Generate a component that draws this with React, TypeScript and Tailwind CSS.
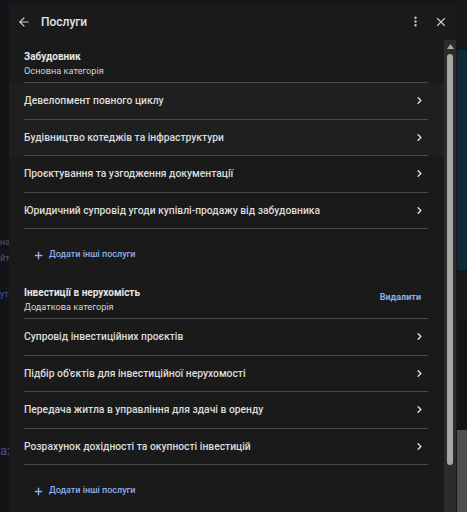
import React from "react";
import { ArrowLeft, EllipsisVertical, X, ChevronRight, Plus } from "lucide-react";

const font = { fontFamily: "Roboto, 'Noto Sans', 'Liberation Sans', sans-serif" };

function Row({ label, hover }: { label: string; hover?: boolean }) {
  return (
    <div className={`flex flex-col ${hover ? "bg-[#1f1f1f]" : ""}`}>
      <div className="mx-[15px] mr-[16px] flex h-[35.5px] items-center justify-between">
        <span className="text-[10.3px] font-medium text-[#dcdcdc]">{label}</span>
        <ChevronRight size={11} strokeWidth={3} className="mr-[3px] text-[#dedede]" />
      </div>
      <div className="mx-[15px] mr-[16px] h-px bg-[#4a4a4a]" />
    </div>
  );
}

function AddButton() {
  return (
    <div className="flex h-[48px] items-center pl-[24px] pt-[4px]">
      <Plus size={11} strokeWidth={3} className="text-[#8fb0e6]" />
      <span className="ml-[5px] text-[9px] font-medium text-[#8fb0e6]">Додати інші послуги</span>
    </div>
  );
}

function SectionHeader({ title, sub, action }: { title: string; sub: string; action?: string }) {
  return (
    <div className="mx-[15px] mr-[16px] flex h-[42px] items-center justify-between border-b border-[#4a4a4a]">
      <div className="flex flex-col pb-[4px] pt-[8px]">
        <span className="text-[10px] font-bold leading-[14px] text-[#e6e6e6]">{title}</span>
        <span className="text-[9.2px] leading-[14px] text-[#d4d4d4]">{sub}</span>
      </div>
      {action && <span className="mr-[7px] text-[9px] font-bold text-[#8fb0e6]">{action}</span>}
    </div>
  );
}

export default function App() {
  return (
    <div style={font} className="flex h-[512px] w-[467px] overflow-hidden bg-[#131418]">
      <div className="flex w-[9px] flex-col pt-[236px] text-[9px] text-[#555a66]">
        <span className="h-[16px]">на</span>
        <span className="h-[36px]">йт</span>
        <span className="h-[153px] text-[#4a4f9a]">ут</span>
        <span className="text-[13px] text-[#5a3f85]">ах</span>
      </div>
      <div className="mt-[3px] flex h-[520px] w-[448px] flex-col bg-[#1a1a1a]">
        <div className="flex h-[37px] items-center pl-[8px] pr-[9px]">
          <ArrowLeft size={14} strokeWidth={2} className="text-[#d0d0d0]" />
          <span className="ml-[10px] text-[12px] font-medium text-[#e2e2e2]">Послуги</span>
          <div className="flex-1" />
          <EllipsisVertical size={13} strokeWidth={2.5} className="text-[#c8c8c8]" />
          <X size={14} strokeWidth={2} className="ml-[12px] text-[#c8c8c8]" />
        </div>
        <div className="flex flex-1">
          <div className="flex w-[435px] flex-col pt-[1px]">
            <SectionHeader title="Забудовник" sub="Основна категорія" />
            <Row label="Девелопмент повного циклу" hover />
            <Row label="Будівництво котеджів та інфраструктури" hover />
            <Row label="Проєктування та узгодження документації" />
            <Row label="Юридичний супровід угоди купівлі-продажу від забудовника" />
            <AddButton />
            <SectionHeader title="Інвестиції в нерухомість" sub="Додаткова категорія" action="Видалити" />
            <Row label="Супровід інвестиційних проєктів" />
            <Row label="Підбір об'єктів для інвестиційної нерухомості" />
            <Row label="Передача житла в управління для здачі в оренду" />
            <Row label="Розрахунок дохідності та окупності інвестицій" />
            <AddButton />
          </div>
          <div className="flex w-[12px] flex-col items-center bg-[#2b2b2b] pt-[4px]">
            <svg width="7" height="5" viewBox="0 0 7 5">
              <polygon points="3.5,0 7,5 0,5" fill="#a6a6a6" />
            </svg>
            <div className="mt-[5px] h-[411px] w-[6px] rounded-full bg-[#a6a6a6]" />
          </div>
        </div>
      </div>
      <div className="flex w-[10px] flex-col bg-[#10151b]">
        <div className="h-[50px] bg-[#16181c]" />
        <div className="h-[220px] bg-[#0e2a36]" />
        <div className="h-[50px] bg-[#15181d]" />
        <div className="h-[110px] bg-[#121419]" />
        <div className="flex-1 bg-[#4a4f50]" />
      </div>
    </div>
  );
}
